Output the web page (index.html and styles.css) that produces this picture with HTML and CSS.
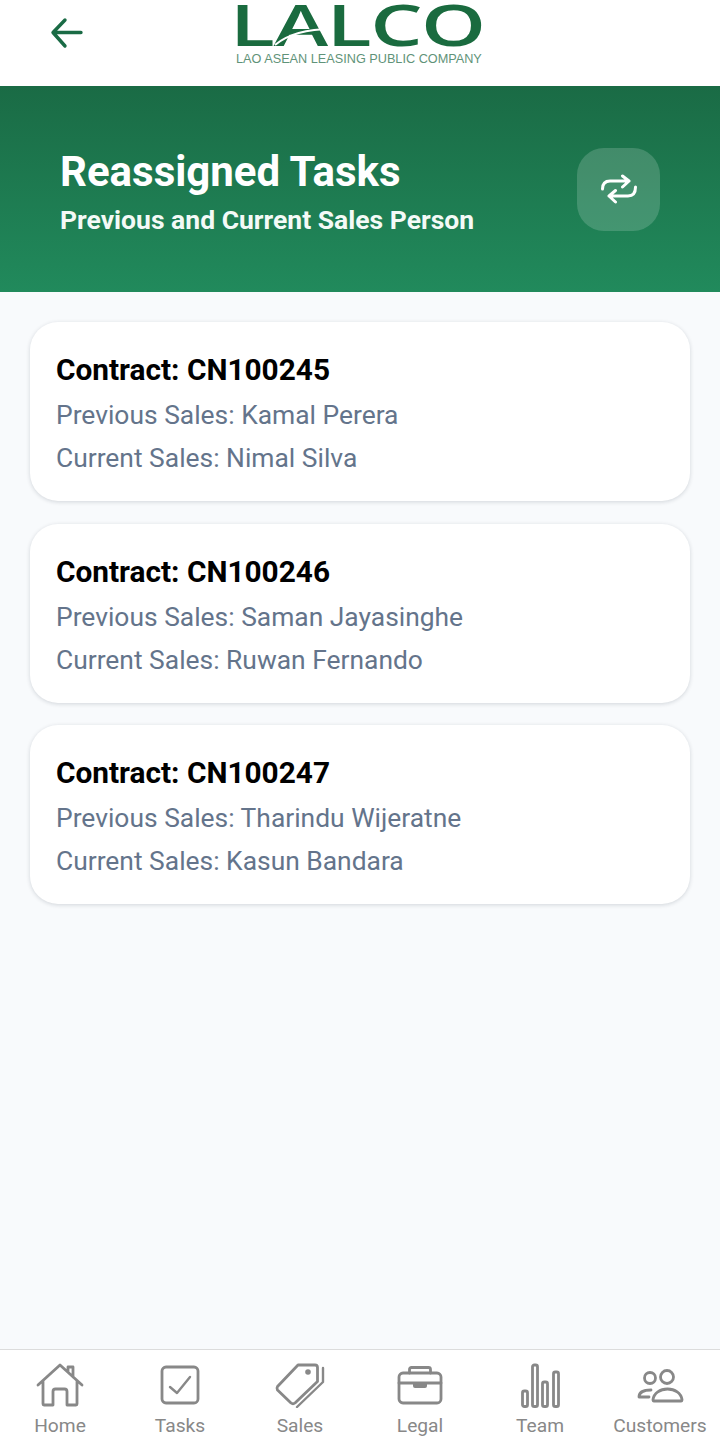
FILE: index.html
```html
<!DOCTYPE html>
<html lang="en">
<head>
<meta charset="utf-8">
<title>Reassigned Tasks</title>
<link rel="stylesheet" href="styles.css">
</head>
<body>
<div class="app">
  <header class="topbar">
    <button class="back" aria-label="Back">
      <svg width="36" height="36" viewBox="0 0 36 36" fill="none" stroke="#1a6b45" stroke-width="3.4" stroke-linecap="round" stroke-linejoin="round"><path d="M32 15.500H5M16 3 4 15.500 16 29"/></svg>
    </button>
    <div class="logo">
      <div class="logo-main">LALCO</div>
      <svg class="logo-swoosh" width="60" height="20" viewBox="0 0 60 20" fill="none" stroke="#fff" stroke-width="2"><path d="M1 19C14 8 32 3 58 3"/></svg>
      <div class="logo-sub">LAO ASEAN LEASING PUBLIC COMPANY</div>
    </div>
  </header>

  <section class="hero">
    <div class="hero-text">
      <h1>Reassigned Tasks</h1>
      <p>Previous and Current Sales Person</p>
    </div>
    <div class="hero-icon">
      <svg width="38" height="30" viewBox="0 0 38 30" fill="none" stroke="#fff" stroke-width="3" stroke-linecap="round" stroke-linejoin="round"><path d="M2.500 15C2.500 9.500 5 7 10 7H29M22.500 2 29 7 22.500 13M35.500 13C35.500 19.500 33 22 28 22H9M15.500 16.500 9 22 15.500 28"/></svg>
    </div>
  </section>

  <main class="list">
    <article class="card">
      <h2>Contract: CN100245</h2>
      <p>Previous Sales: Kamal Perera</p>
      <p>Current Sales: Nimal Silva</p>
    </article>
    <article class="card">
      <h2>Contract: CN100246</h2>
      <p>Previous Sales: Saman Jayasinghe</p>
      <p>Current Sales: Ruwan Fernando</p>
    </article>
    <article class="card">
      <h2>Contract: CN100247</h2>
      <p>Previous Sales: Tharindu Wijeratne</p>
      <p>Current Sales: Kasun Bandara</p>
    </article>
  </main>

  <nav class="tabs">
    <a class="tab">
      <svg width="48" height="46" viewBox="0 0 48 46"><path d="M2 23 24 3 46 23M7 19V42Q7 43 8 43H17V29.500Q17 27 19.500 27H28.500Q31 27 31 29.500V43H40Q41 43 41 42V19M32 10V5H37V15"/></svg>
      <span>Home</span>
    </a>
    <a class="tab">
      <svg width="48" height="46" viewBox="0 0 48 46"><rect x="6" y="5" width="36" height="36" rx="4"/><path class="thin" d="M14 25 21 31 34 15"/></svg>
      <span>Tasks</span>
    </a>
    <a class="tab">
      <svg width="52" height="46" viewBox="0 0 52 46"><path d="M3.500 24.500 24 3H41Q43.500 3 43.500 5.500V19.500L21 41Q19 42.500 17 41L3.500 28Q2.500 26 3.500 24.500Z"/><circle class="dot" cx="34" cy="10" r="2.800"/><path class="thin" d="M49 6V20L23 45"/></svg>
      <span>Sales</span>
    </a>
    <a class="tab">
      <svg width="48" height="46" viewBox="0 0 48 46"><rect x="3" y="11" width="42" height="30" rx="4"/><path d="M13.500 11V7.500Q13.500 5.500 15.500 5.500H32.500Q34.500 5.500 34.500 7.500V11M3 21H45"/><path class="fill" d="M17 21H31V24Q31 26 29 26H19Q17 26 17 24Z"/></svg>
      <span>Legal</span>
    </a>
    <a class="tab">
      <svg class="bars" width="48" height="46" viewBox="0 0 48 46"><rect x="6.500" y="29" width="5" height="15.500" rx="1.800"/><rect x="16.500" y="3" width="5" height="41.500" rx="1.800"/><rect x="26.500" y="20" width="5" height="24.500" rx="1.800"/><rect x="37.500" y="10" width="5" height="34.500" rx="1.800"/></svg>
      <span>Team</span>
    </a>
    <a class="tab">
      <svg width="48" height="46" viewBox="0 0 48 46"><circle cx="14" cy="16" r="5.500"/><circle cx="31" cy="15" r="6.500"/><path d="M13 35H3C3 30 8 28 15 28M18 39H45Q46 39 46 37.500C45 31 39 27 31.500 27C24 27 18 31 17 37.500Q17 39 18 39Z"/></svg>
      <span>Customers</span>
    </a>
  </nav>
</div>
</body>
</html>
```

FILE: styles.css
```css
* {
  box-sizing: border-box;
  margin: 0;
  padding: 0;
}

html,
body {
  height: 100%;
}

body {
  font-family: Roboto, "Liberation Sans", sans-serif;
  background: #f8fafc;
}

.app {
  height: 1442px;
  display: flex;
  flex-direction: column;
}

/* Logo bar */
.topbar {
  height: 86px;
  flex: none;
  background: #fff;
  position: relative;
  display: flex;
  justify-content: center;
  align-items: flex-start;
  padding-top: 4px;
}

.back {
  position: absolute;
  left: 49px;
  top: 17px;
  width: 36px;
  height: 36px;
  border: 0;
  background: none;
  display: flex;
}

.logo {
  width: 248px;
  position: relative;
  overflow: hidden;
}

.logo-main {
  font-family: "Open Sans", sans-serif;
  font-size: 57px;
  font-weight: 600;
  line-height: 41px;
  height: 42px;
  letter-spacing: -1px;
  color: #1a6b3f;
  transform: scaleX(1.45);
  transform-origin: left center;
  white-space: nowrap;
  margin-left: -6px;
}

.logo-swoosh {
  position: absolute;
  left: 38px;
  top: 22px;
}

.logo-sub {
  font-family: "Liberation Sans", sans-serif;
  font-size: 12.700px;
  font-weight: 400;
  line-height: 14px;
  margin-top: 6px;
  color: #5f9379;
  white-space: nowrap;
}

/* Page heading band */
.hero {
  height: 206px;
  flex: none;
  background: linear-gradient(180deg, #1a6b45, #218a5c);
  display: flex;
  align-items: center;
  justify-content: space-between;
  padding: 0 60px;
}

.hero h1 {
  font-size: 42px;
  font-weight: 700;
  line-height: 48px;
  margin-bottom: 8px;
  color: #fff;
}

.hero p {
  font-size: 26.500px;
  font-weight: 700;
  line-height: 32px;
  color: #f4faf7;
}

.hero-text {
  margin-top: 6px;
}

.hero-icon {
  width: 83px;
  height: 83px;
  border-radius: 27px;
  background: rgba(255, 255, 255, 0.17);
  display: flex;
  align-items: center;
  justify-content: center;
}

/* Contract cards */
.list {
  flex: 1;
  display: flex;
  flex-direction: column;
  gap: 22.500px;
  padding: 30px 30px 0;
}

.card {
  height: 179px;
  background: #fff;
  border-radius: 28px;
  padding: 28px 26px 0;
  box-shadow: 0 1px 4px rgba(15, 23, 42, 0.16);
}

.card h2 {
  font-size: 29.800px;
  font-weight: 700;
  line-height: 40px;
  margin-bottom: 4px;
  color: #000;
}

.card p {
  font-size: 26.400px;
  font-weight: 400;
  line-height: 43px;
  color: #64748b;
}

/* Bottom navigation */
.tabs {
  height: 93px;
  flex: none;
  background: #fff;
  border-top: 1px solid #dcdcdc;
  display: grid;
  grid-template-columns: repeat(6, 1fr);
  padding-top: 12px;
}

.tab {
  display: flex;
  flex-direction: column;
  align-items: center;
  color: #888;
  font-size: 19.200px;
  line-height: 24px;
}

.tab svg {
  fill: none;
  stroke: #888;
  stroke-width: 2.800;
  stroke-linecap: round;
  stroke-linejoin: round;
  margin-bottom: 6px;
}

.tab .thin {
  stroke-width: 2.400;
}

.tab .dot,
.tab .fill {
  fill: #888;
  stroke: none;
}
```
